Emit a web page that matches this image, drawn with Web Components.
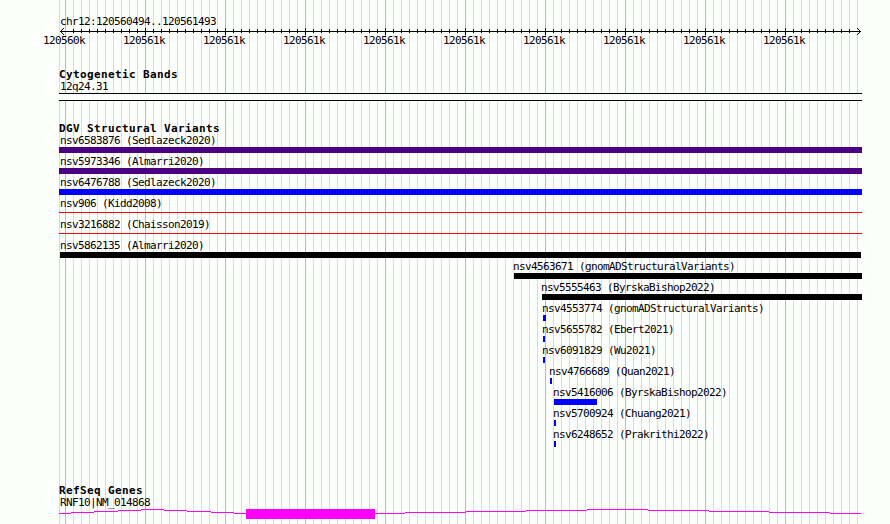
<!DOCTYPE html>
<html lang="en">
<head>
<meta charset="utf-8">
<title>chr12:120560494..120561493</title>
<style>
  body {
    margin: 0;
    background: #fdfffc;
  }
</style>
</head>
<body>
<genome-browser></genome-browser>

<script>
const VARIANTS = [
  { name: "nsv6583876 (Sedlazeck2020)", start: 59, end: 862, color: "#4b0082" },
  { name: "nsv5973346 (Almarri2020)", start: 59, end: 862, color: "#4b0082" },
  { name: "nsv6476788 (Sedlazeck2020)", start: 59, end: 862, color: "#0000ff" },
  { name: "nsv906 (Kidd2008)", start: 59, end: 862, color: "#ff0000", thin: true },
  { name: "nsv3216882 (Chaisson2019)", start: 59, end: 862, color: "#ff0000", thin: true },
  { name: "nsv5862135 (Almarri2020)", start: 60, end: 861, color: "#000000" },
  { name: "nsv4563671 (gnomADStructuralVariants)", start: 514, end: 862, color: "#000000" },
  { name: "nsv5555463 (ByrskaBishop2022)", start: 542, end: 862, color: "#000000" },
  { name: "nsv4553774 (gnomADStructuralVariants)", start: 543, end: 546, color: "#0000ff" },
  { name: "nsv5655782 (Ebert2021)", start: 543, end: 545, color: "#0000ff" },
  { name: "nsv6091829 (Wu2021)", start: 543, end: 545, color: "#0000ff" },
  { name: "nsv4766689 (Quan2021)", start: 550, end: 552, color: "#0000ff" },
  { name: "nsv5416006 (ByrskaBishop2022)", start: 554, end: 597, color: "#0000ff" },
  { name: "nsv5700924 (Chuang2021)", start: 554, end: 556, color: "#0000ff" },
  { name: "nsv6248652 (Prakrithi2022)", start: 554, end: 556, color: "#0000ff" },
];

class ScaleRuler extends HTMLElement {
  constructor() {
    super();
    this.attachShadow({ mode: "open" });
  }

  connectedCallback() {
    let ticks = "";
    for (let x = 73; x < 857; x += 8) {
      ticks += (x - 65) % 80 === 0 ? `M${x} 0h1v7h-1z` : `M${x} 1h1v4h-1z`;
    }
    const labels = Array.from({ length: 10 }, (_, i) =>
      `<span>${i === 0 ? "120560k" : "120561k"}</span>`).join("");

    this.shadowRoot.innerHTML = `
      <style>
        :host { display: block; height: 55px; padding-top: 14px; box-sizing: border-box; margin-bottom: 13px; }
        .region { height: 14px; line-height: 16px; padding-left: 60px; }
        svg { display: block; }
        .labels { display: grid; grid-template-columns: repeat(10, 80px); margin-left: 43px; height: 12px; line-height: 12px; }
      </style>
      <div class="region"><slot></slot></div>
      <svg width="890" height="7" shape-rendering="crispEdges">
        <path d="M60 3h801v1h-801z${ticks}"/>
        <path d="M63 0h1v1h-1zM62 1h1v1h-1zM61 2h1v1h-1zM61 4h1v1h-1zM62 5h1v1h-1zM63 6h1v1h-1zM857 0h1v1h-1zM858 1h1v1h-1zM859 2h1v1h-1zM859 4h1v1h-1zM858 5h1v1h-1zM857 6h1v1h-1z"/>
      </svg>
      <div class="labels">${labels}</div>
    `;
  }
}

class TrackSection extends HTMLElement {
  constructor() {
    super();
    this.attachShadow({ mode: "open" });
    this.shadowRoot.innerHTML = `
      <style>
        :host { display: block; }
        h2 {
          margin: 0 0 0 59px;
          height: 12px;
          font: bold 11px/14px "DejaVu Sans Mono", monospace;
          letter-spacing: 0.38px;
        }
      </style>
      <h2></h2>
      <slot></slot>
    `;
  }

  connectedCallback() {
    this.shadowRoot.querySelector("h2").textContent = this.getAttribute("heading");
  }
}

class CytoBand extends HTMLElement {
  constructor() {
    super();
    this.attachShadow({ mode: "open" });
    this.shadowRoot.innerHTML = `
      <style>
        :host { display: block; height: 42px; }
        .name { height: 13px; line-height: 14px; padding-left: 60px; }
        .band { width: 803px; height: 6px; margin-left: 59px; border: solid #000; border-width: 1px 0; background: #fdfffc; }
      </style>
      <div class="name"><slot></slot></div>
      <div class="band"></div>
    `;
  }
}

class VariantFeature extends HTMLElement {
  constructor() {
    super();
    this.attachShadow({ mode: "open" });
  }

  connectedCallback() {
    const start = Number(this.getAttribute("start"));
    const end = Number(this.getAttribute("end"));
    const thin = this.hasAttribute("thin");
    // labels of features clipped at the left edge stay at the same column
    const label = Math.max(start - 1, 60);

    this.shadowRoot.innerHTML = `
      <style>
        :host { display: block; height: 21px; white-space: nowrap; }
        .name { height: 13px; line-height: 14px; padding-left: ${label}px; }
        .bar {
          width: ${end - start}px;
          height: ${thin ? 1 : 6}px;
          margin: ${thin ? 2 : 0}px 0 0 ${start}px;
          background: ${this.getAttribute("color")};
        }
      </style>
      <div class="name"><slot></slot></div>
      <div class="bar"></div>
    `;
  }
}

class GeneModel extends HTMLElement {
  constructor() {
    super();
    this.attachShadow({ mode: "open" });
    this.shadowRoot.innerHTML = `
      <style>
        :host { display: block; }
        .name { height: 12px; line-height: 14px; padding-left: 60px; }
        svg { display: block; }
      </style>
      <div class="name"><slot></slot></div>
      <svg width="890" height="15" shape-rendering="crispEdges" fill="#ff00ff">
        <path d="M59 5h12v1h-12zM71 4h23v1h-23zM94 3h24v1h-24zM118 2h23v1h-23zM141 1h23v1h-23zM164 2h23v1h-23zM187 3h24v1h-24zM211 4h23v1h-23zM234 5h12v1h-12z"/>
        <path d="M246 1h129v10h-129z"/>
        <path d="M375 5h30v1h-30zM405 4h61v1h-61zM466 3h60v1h-60zM526 2h61v1h-61zM587 1h61v1h-61zM648 2h61v1h-61zM709 3h60v1h-60zM769 4h61v1h-61zM830 5h31v1h-31z"/>
      </svg>
    `;
  }
}

class GenomeBrowser extends HTMLElement {
  constructor() {
    super();
    this.attachShadow({ mode: "open" });
  }

  static get styles() {
    return `
      :host {
        display: block;
        width: 890px;
        height: 524px;
        overflow: hidden;
        color: #000;
        font: 11px/12px "DejaVu Sans Mono", monospace;
        letter-spacing: -0.62px;
        background:
          linear-gradient(#afeeee, #afeeee) 59px 0 / 1px 100% no-repeat,
          repeating-linear-gradient(90deg, #87ceeb 0 1px, transparent 1px 80px) 65px 0 / 792px 100% no-repeat,
          repeating-linear-gradient(90deg, #afeeee 0 1px, transparent 1px 8px) 65px 0 / 793px 100% no-repeat,
          #fdfffc;
      }

      .variants {
        height: 362px;
      }
    `;
  }

  connectedCallback() {
    const features = VARIANTS.map((v) => `
      <variant-feature start="${v.start}" end="${v.end}" color="${v.color}" ${v.thin ? "thin" : ""}>${v.name}</variant-feature>`).join("");

    this.shadowRoot.innerHTML = `
      <style>${GenomeBrowser.styles}</style>
      <scale-ruler>chr12:120560494..120561493</scale-ruler>
      <track-section heading="Cytogenetic Bands">
        <cyto-band>12q24.31</cyto-band>
      </track-section>
      <track-section class="variants" heading="DGV Structural Variants">${features}
      </track-section>
      <track-section heading="RefSeq Genes">
        <gene-model>RNF10|NM_014868</gene-model>
      </track-section>
    `;
  }
}

customElements.define("scale-ruler", ScaleRuler);
customElements.define("track-section", TrackSection);
customElements.define("cyto-band", CytoBand);
customElements.define("variant-feature", VariantFeature);
customElements.define("gene-model", GeneModel);
customElements.define("genome-browser", GenomeBrowser);
</script>
</body>
</html>
